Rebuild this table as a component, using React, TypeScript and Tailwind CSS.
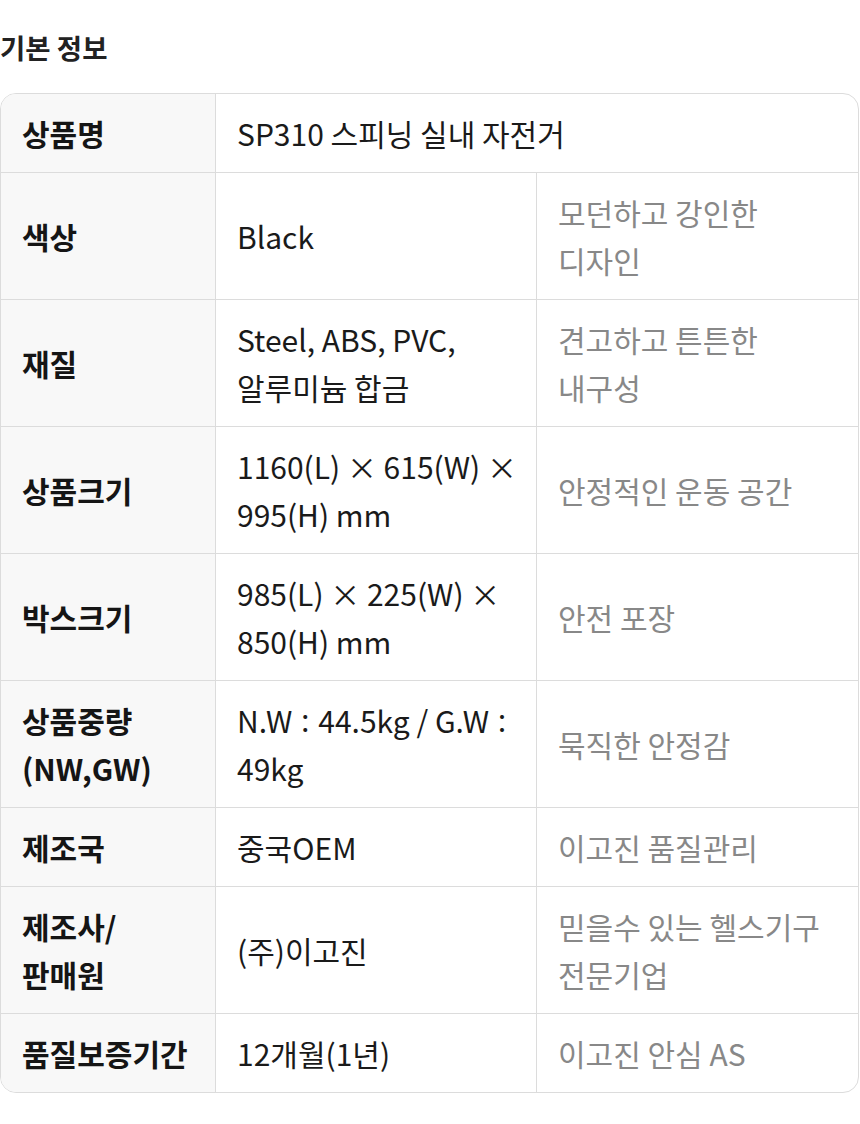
const rows: { label: React.ReactNode; value: React.ReactNode; note?: string }[] = [
    { label: '상품명', value: 'SP310 스피닝 실내 자전거' },
    { label: '색상', value: 'Black', note: '모던하고 강인한 디자인' },
    { label: '재질', value: 'Steel, ABS, PVC, 알루미늄 합금', note: '견고하고 튼튼한 내구성' },
    { label: '상품크기', value: '1160(L) × 615(W) × 995(H) mm', note: '안정적인 운동 공간' },
    { label: '박스크기', value: '985(L) × 225(W) × 850(H) mm', note: '안전 포장' },
    {
        label: (
            <>
                상품중량
                <br />
                (NW,GW)
            </>
        ),
        value: (
            <>
                N.W<span className="text-[26px] leading-[0]">：</span>44.5kg / G.W
                <span className="text-[26px] leading-[0]">：</span>
                <wbr />
                49kg
            </>
        ),
        note: '묵직한 안정감',
    },
    { label: '제조국', value: '중국OEM', note: '이고진 품질관리' },
    {
        label: (
            <>
                제조사/
                <br />
                판매원
            </>
        ),
        value: '(주)이고진',
        note: '믿을수 있는 헬스기구 전문기업',
    },
    { label: '품질보증기간', value: '12개월(1년)', note: '이고진 안심 AS' },
];

export default function App() {
    return (
        <div className="bg-white w-[860px] min-h-[1124px] font-['Noto_Sans_CJK_KR',sans-serif]">
            <h2 className="pt-[29px] pb-[28px] text-[27.5px] leading-[36px] font-bold text-[#222]">
                기본 정보
            </h2>

            <div className="w-[859px] border border-[#dcdcdc] rounded-[16px] overflow-hidden">
                <div className="grid grid-cols-[214px_321px_1fr] text-[30px] leading-[48px] break-keep">
                    {rows.map((row, i) => (
                        <div key={i} className="contents">
                            <div
                                className={`bg-[#f8f8f8] px-[21px] py-[15px] font-bold text-[#151515] flex items-center ${
                                    i > 0 ? 'border-t border-[#dcdcdc]' : ''
                                }`}
                            >
                                <span>{row.label}</span>
                            </div>
                            <div
                                className={`border-l border-[#dcdcdc] pl-[21px] pr-[14px] py-[15px] text-[#1a1a1a] flex items-center ${
                                    i > 0 ? 'border-t' : ''
                                } ${row.note ? '' : 'col-span-2'}`}
                            >
                                <span>{row.value}</span>
                            </div>
                            {row.note && (
                                <div className="border-l border-t border-[#dcdcdc] pl-[21px] pr-[24px] py-[15px] text-[#888] flex items-center">
                                    <span>{row.note}</span>
                                </div>
                            )}
                        </div>
                    ))}
                </div>
            </div>
        </div>
    );
}
